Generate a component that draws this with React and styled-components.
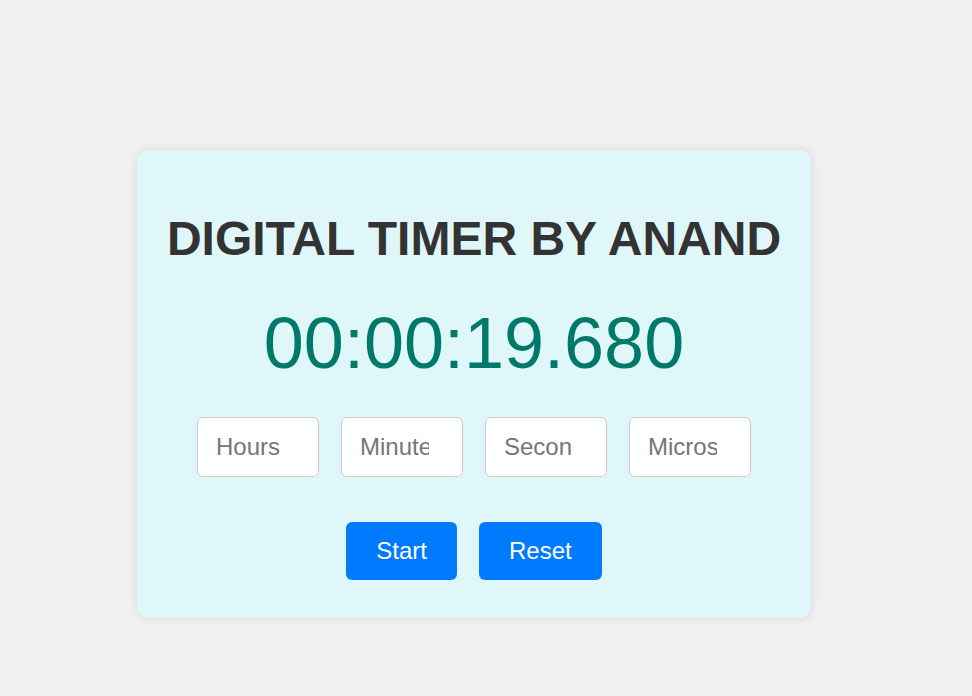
import React, { useState } from 'react';
import styled, { createGlobalStyle } from 'styled-components';

const GlobalStyle = createGlobalStyle`
  html, body {
    margin: 0;
    padding: 0;
    background: #f0f0f0;
    font-family: "Liberation Sans", Arial, sans-serif;
  }
`;

const Page = styled.div`
  height: 696px;
  display: flex;
  justify-content: center;
  align-items: flex-start;
  padding: 150px 24px 0 0;
  box-sizing: border-box;
`;

const Card = styled.div`
  width: 674px;
  height: 468px;
  box-sizing: border-box;
  background: #e0f7fa;
  border-radius: 12px;
  box-shadow: 0 0 10px rgba(0, 0, 0, 0.1);
  display: flex;
  flex-direction: column;
  align-items: center;
  padding-top: 61px;
`;

const Title = styled.h1`
  margin: 0;
  font-size: 48px;
  font-weight: bold;
  color: #333;
  line-height: 56px;
`;

const Display = styled.div`
  margin-top: 35px;
  font-size: 72px;
  color: #00796b;
  line-height: 82px;
`;

const InputRow = styled.div`
  margin-top: 33px;
  display: flex;
  gap: 22px;
`;

const TimeInput = styled.input`
  width: 122px;
  height: 60px;
  box-sizing: border-box;
  border: 1px solid #ccc;
  border-radius: 6px;
  background: #fff;
  padding: 0 18px;
  font-family: "Liberation Sans", Arial, sans-serif;
  font-size: 24px;
  color: #333;
  outline: none;
  &::placeholder {
    color: #757575;
  }
`;

const ButtonRow = styled.div`
  margin-top: 45px;
  display: flex;
  gap: 22px;
`;

const Button = styled.button`
  height: 58px;
  padding: 0 30px;
  border: none;
  border-radius: 6px;
  background: #007bff;
  color: #fff;
  font-family: "Liberation Sans", Arial, sans-serif;
  font-size: 24px;
  cursor: pointer;
`;

const App = () => {
  const [values, setValues] = useState({ h: '', m: '', s: '', ms: '' });
  const fields = [
    { key: 'h', label: 'Hours' },
    { key: 'm', label: 'Minutes' },
    { key: 's', label: 'Seconds' },
    { key: 'ms', label: 'Microseconds' },
  ];

  return (
    <>
      <GlobalStyle />
      <Page>
        <Card>
          <Title>DIGITAL TIMER BY ANAND</Title>
          <Display>00:00:19.680</Display>
          <InputRow>
            {fields.map((f) => (
              <TimeInput
                key={f.key}
                type="number"
                placeholder={f.label}
                value={values[f.key]}
                onChange={(e) => setValues({ ...values, [f.key]: e.target.value })}
              />
            ))}
          </InputRow>
          <ButtonRow>
            <Button>Start</Button>
            <Button>Reset</Button>
          </ButtonRow>
        </Card>
      </Page>
    </>
  );
};

export default App;
